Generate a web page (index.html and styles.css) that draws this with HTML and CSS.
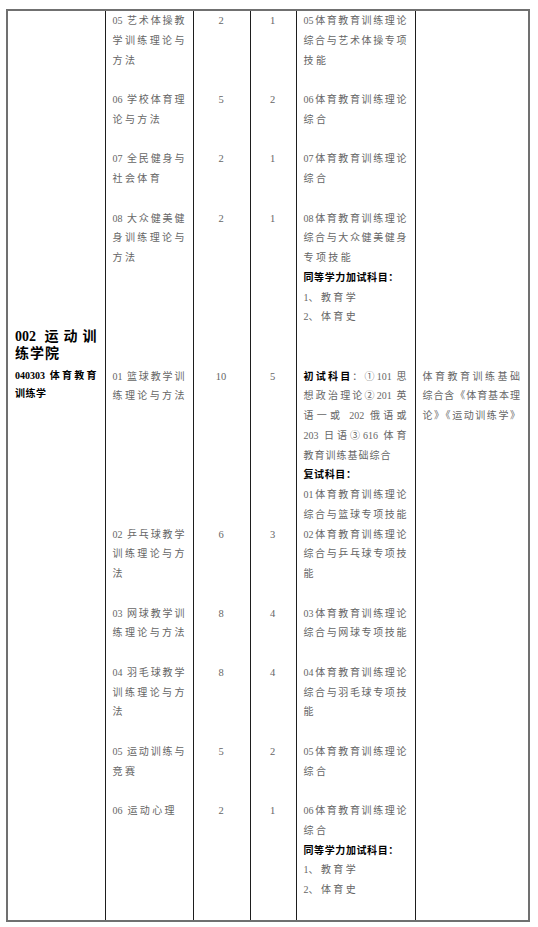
FILE: index.html
```html
<!DOCTYPE html>
<html lang="zh-CN">
<head>
<meta charset="utf-8">
<title>招生专业目录</title>
<link rel="stylesheet" href="styles.css">
</head>
<body>
<table class="plan">
  <colgroup>
    <col class="c1"><col class="c2"><col class="c3"><col class="c4"><col class="c5"><col class="c6">
  </colgroup>
  <tr class="b1">
    <td class="unit"></td>
    <td class="dir"><span class="ln f"><span class="n">05</span> 艺术体操教</span><span class="ln f">学训练理论与</span><span class="ln">方法</span></td>
    <td class="num">2</td>
    <td class="num">1</td>
    <td class="subj"><span class="ln f"><span class="n">05</span>体育教育训练理论</span><span class="ln f">综合与艺术体操专项</span><span class="ln">技能</span></td>
    <td class="note"></td>
  </tr>
  <tr class="b1">
    <td class="unit"></td>
    <td class="dir"><span class="ln f"><span class="n">06</span> 学校体育理</span><span class="ln">论与方法</span></td>
    <td class="num">5</td>
    <td class="num">2</td>
    <td class="subj"><span class="ln f"><span class="n">06</span>体育教育训练理论</span><span class="ln">综合</span></td>
    <td class="note"></td>
  </tr>
  <tr class="b1">
    <td class="unit"></td>
    <td class="dir"><span class="ln f"><span class="n">07</span> 全民健身与</span><span class="ln">社会体育</span></td>
    <td class="num">2</td>
    <td class="num">1</td>
    <td class="subj"><span class="ln f"><span class="n">07</span>体育教育训练理论</span><span class="ln">综合</span></td>
    <td class="note"></td>
  </tr>
  <tr class="b2">
    <td class="unit head"><span class="ln f"><span class="n">002</span> 运动训</span><span class="ln">练学院</span></td>
    <td class="dir"><span class="ln f"><span class="n">08</span> 大众健美健</span><span class="ln f">身训练理论与</span><span class="ln">方法</span></td>
    <td class="num">2</td>
    <td class="num">1</td>
    <td class="subj"><span class="ln f"><span class="n">08</span>体育教育训练理论</span><span class="ln f">综合与大众健美健身</span><span class="ln">专项技能</span><span class="ln bold">同等学力加试科目：</span><span class="ln"><span class="n">1</span>、教育学</span><span class="ln"><span class="n">2</span>、体育史</span></td>
    <td class="note"></td>
  </tr>
  <tr class="b0">
    <td class="unit major"><span class="ln f"><span class="n">040303</span> 体育教育</span><span class="ln">训练学</span></td>
    <td class="dir"><span class="ln f"><span class="n">01</span> 篮球教学训</span><span class="ln f">练理论与方法</span></td>
    <td class="num">10</td>
    <td class="num">5</td>
    <td class="subj"><span class="ln f"><b>初试科目</b>：①<span class="n">101</span> 思</span><span class="ln f">想政治理论②<span class="n">201</span> 英</span><span class="ln f">语一或 <span class="n">202</span> 俄语或</span><span class="ln f"><span class="n">203</span> 日语③<span class="n">616</span> 体育</span><span class="ln mid">教育训练基础综合</span><span class="ln bold">复试科目：</span><span class="ln f"><span class="n">01</span>体育教育训练理论</span><span class="ln f">综合与篮球专项技能</span></td>
    <td class="note"><span class="ln f">体育教育训练基础</span><span class="ln f">综合含《体育基本理</span><span class="ln f">论》《运动训练学》</span></td>
  </tr>
  <tr class="b1">
    <td class="unit"></td>
    <td class="dir"><span class="ln f"><span class="n">02</span> 乒乓球教学</span><span class="ln f">训练理论与方</span><span class="ln">法</span></td>
    <td class="num">6</td>
    <td class="num">3</td>
    <td class="subj"><span class="ln f"><span class="n">02</span>体育教育训练理论</span><span class="ln f">综合与乒乓球专项技</span><span class="ln">能</span></td>
    <td class="note"></td>
  </tr>
  <tr class="b1">
    <td class="unit"></td>
    <td class="dir"><span class="ln f"><span class="n">03</span> 网球教学训</span><span class="ln f">练理论与方法</span></td>
    <td class="num">8</td>
    <td class="num">4</td>
    <td class="subj"><span class="ln f"><span class="n">03</span>体育教育训练理论</span><span class="ln f">综合与网球专项技能</span></td>
    <td class="note"></td>
  </tr>
  <tr class="b1">
    <td class="unit"></td>
    <td class="dir"><span class="ln f"><span class="n">04</span> 羽毛球教学</span><span class="ln f">训练理论与方</span><span class="ln">法</span></td>
    <td class="num">8</td>
    <td class="num">4</td>
    <td class="subj"><span class="ln f"><span class="n">04</span>体育教育训练理论</span><span class="ln f">综合与羽毛球专项技</span><span class="ln">能</span></td>
    <td class="note"></td>
  </tr>
  <tr class="b1">
    <td class="unit"></td>
    <td class="dir"><span class="ln f"><span class="n">05</span> 运动训练与</span><span class="ln">竞赛</span></td>
    <td class="num">5</td>
    <td class="num">2</td>
    <td class="subj"><span class="ln f"><span class="n">05</span>体育教育训练理论</span><span class="ln">综合</span></td>
    <td class="note"></td>
  </tr>
  <tr class="b1">
    <td class="unit"></td>
    <td class="dir"><span class="ln"><span class="n">06</span> 运动心理</span></td>
    <td class="num">2</td>
    <td class="num">1</td>
    <td class="subj"><span class="ln f"><span class="n">06</span>体育教育训练理论</span><span class="ln">综合</span><span class="ln bold">同等学力加试科目：</span><span class="ln"><span class="n">1</span>、教育学</span><span class="ln"><span class="n">2</span>、体育史</span></td>
    <td class="note"></td>
  </tr>
</table>
</body>
</html>
```

FILE: styles.css
```css
html, body {
  margin: 0;
  padding: 0;
  background: #ffffff;
}

body {
  font-family: "Liberation Serif", "Noto Sans CJK SC", serif;
  font-size: 10px;
  color: #666666;
}

.plan {
  border-collapse: collapse;
  table-layout: fixed;
  width: 522px;
  margin: 9px 0 0 6px;
  border: 2px solid #707070;
}

.c1 { width: 98px; }
.c2 { width: 88px; }
.c3 { width: 57px; }
.c4 { width: 46px; }
.c5 { width: 119px; }
.c6 { width: 114px; }

.plan td {
  border-left: 1px solid #1e1e1e;
  border-right: 1px solid #1e1e1e;
  padding: 0 8px 0 7px;
  vertical-align: top;
  line-height: 19.75px;
  white-space: nowrap;
}

.plan tr:first-child td:first-child,
.plan td.unit {
  border-left: 2px solid #707070;
}

.plan td.note {
  border-right: 2px solid #707070;
}

.b0 td { padding-bottom: 0; }
.plan .b1 td { padding-bottom: 19.75px; }
.plan .b2 td { padding-bottom: 39.5px; }

.ln {
  display: block;
  letter-spacing: 2.4px;
}

.ln.f {
  letter-spacing: 0;
  text-align: justify;
  text-align-last: justify;
}

.ln.mid {
  letter-spacing: 1px;
}

.n {
  letter-spacing: 0;
}

.num {
  text-align: center;
  font-size: 10.5px;
}

.bold,
.subj b {
  font-weight: 700;
  color: #000000;
}

.ln.bold {
  letter-spacing: 0.6px;
}

.plan .b2 td.head {
  vertical-align: bottom;
  padding-bottom: 4px;
  font-size: 14px;
  line-height: 17.5px;
  font-weight: 700;
  color: #000000;
}

.head .ln {
  letter-spacing: 1px;
}

.head .ln.f {
  letter-spacing: 0;
}

.plan td.major {
  line-height: 18px;
  font-weight: 700;
  color: #000000;
}

.major .ln {
  letter-spacing: 0.5px;
}

.major .ln.f {
  letter-spacing: 0;
}
```
